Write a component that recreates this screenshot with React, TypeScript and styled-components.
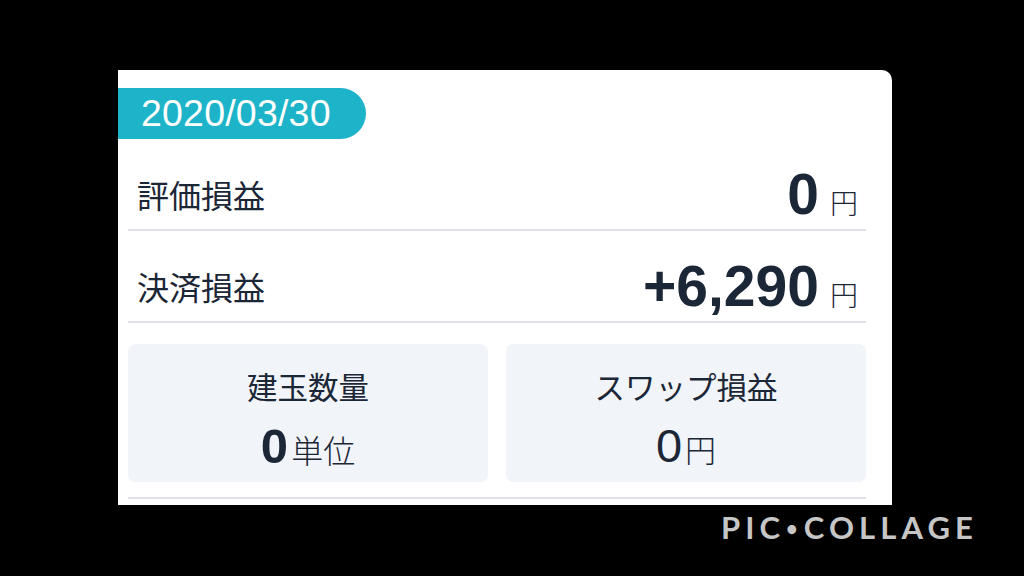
import React from "react";
import styled, { createGlobalStyle } from "styled-components";

const Global = createGlobalStyle`
  html, body { margin: 0; padding: 0; background: #000; }
  body { font-family: "Liberation Sans", "Noto Sans CJK JP", sans-serif; }
`;

const Stage = styled.div`
  position: relative;
  width: 1024px;
  height: 576px;
  background: #000;
  overflow: hidden;
  padding: 70px 0 0 118px;
  box-sizing: border-box;
`;

const Card = styled.div`
  width: 774px;
  height: 435px;
  background: #fff;
  border-top-right-radius: 10px;
  padding: 18px 26px 0 10px;
  box-sizing: border-box;
  display: flex;
  flex-direction: column;
  color: #1b2636;
`;

const DatePill = styled.div`
  align-self: flex-start;
  margin-left: -10px;
  height: 51px;
  padding: 0 35px 0 23px;
  background: #1db4c9;
  border-radius: 0 26px 26px 0;
  color: #fff;
  font-family: "Liberation Sans", sans-serif;
  font-size: 37.5px;
  display: flex;
  align-items: center;
  letter-spacing: 0.2px;
`;

const Row = styled.div`
  height: 92px;
  box-sizing: border-box;
  padding: 20px 8px 0 9px;
  display: flex;
  align-items: center;
  justify-content: space-between;
  border-bottom: 2px solid #dfe3e8;
  &:first-of-type { margin-top: 1px; }
`;

const Label = styled.span<{ $size?: number }>`
  font-family: "Noto Sans CJK JP", sans-serif;
  font-size: ${(p) => p.$size ?? 32}px;
  line-height: 1;
  color: #1b2636;
`;

const Value = styled.span`
  display: flex;
  align-items: baseline;
  gap: 11px;
`;

const Num = styled.span<{ $size: number; $weight: number }>`
  font-family: "Liberation Sans", sans-serif;
  font-size: ${(p) => p.$size}px;
  font-weight: ${(p) => p.$weight};
  line-height: 1;
  color: #1b2636;
`;

const Unit = styled.span<{ $size: number }>`
  font-family: "Noto Sans CJK JP", sans-serif;
  font-size: ${(p) => p.$size}px;
  line-height: 1;
  font-weight: 300;
  color: #1b2636;
`;

const Boxes = styled.div`
  display: grid;
  grid-template-columns: 1fr 1fr;
  gap: 18px;
  margin-top: 21px;
  padding-bottom: 15px;
  border-bottom: 2px solid #dfe3e8;
`;

const Box = styled.div`
  height: 138px;
  background: #f1f4f8;
  border-radius: 7px;
  display: flex;
  flex-direction: column;
  align-items: center;
  padding-top: 27px;
  box-sizing: border-box;
`;

const BoxValue = styled.div`
  margin-top: 20px;
  display: flex;
  align-items: baseline;
  gap: 3px;
`;

const Watermark = styled.div`
  position: absolute;
  right: 46px;
  bottom: 33px;
  font-family: "Lato", sans-serif;
  font-weight: 700;
  font-size: 31px;
  letter-spacing: 5.1px;
  color: #c6c6c6;
  line-height: 1;
  display: flex;
  align-items: center;
`;

const Dot = styled.span`
  font-size: 20px;
  margin: 0 1px;
`;

export default function App() {
  return (
    <>
      <Global />
      <Stage>
        <Card>
          <DatePill>2020/03/30</DatePill>
          <Row>
            <Label>評価損益</Label>
            <Value>
              <Num $size={57} $weight={700}>0</Num>
              <Unit $size={28}>円</Unit>
            </Value>
          </Row>
          <Row>
            <Label>決済損益</Label>
            <Value>
              <Num $size={57} $weight={700}>+6,290</Num>
              <Unit $size={28}>円</Unit>
            </Value>
          </Row>
          <Boxes>
            <Box>
              <Label $size={30.5}>建玉数量</Label>
              <BoxValue>
                <Num $size={49} $weight={700}>0</Num>
                <Unit $size={32}>単位</Unit>
              </BoxValue>
            </Box>
            <Box>
              <Label $size={30.5}>スワップ損益</Label>
              <BoxValue>
                <Num $size={47} $weight={400}>0</Num>
                <Unit $size={31}>円</Unit>
              </BoxValue>
            </Box>
          </Boxes>
        </Card>
        <Watermark>
          PIC<Dot>•</Dot>COLLAGE
        </Watermark>
      </Stage>
    </>
  );
}
